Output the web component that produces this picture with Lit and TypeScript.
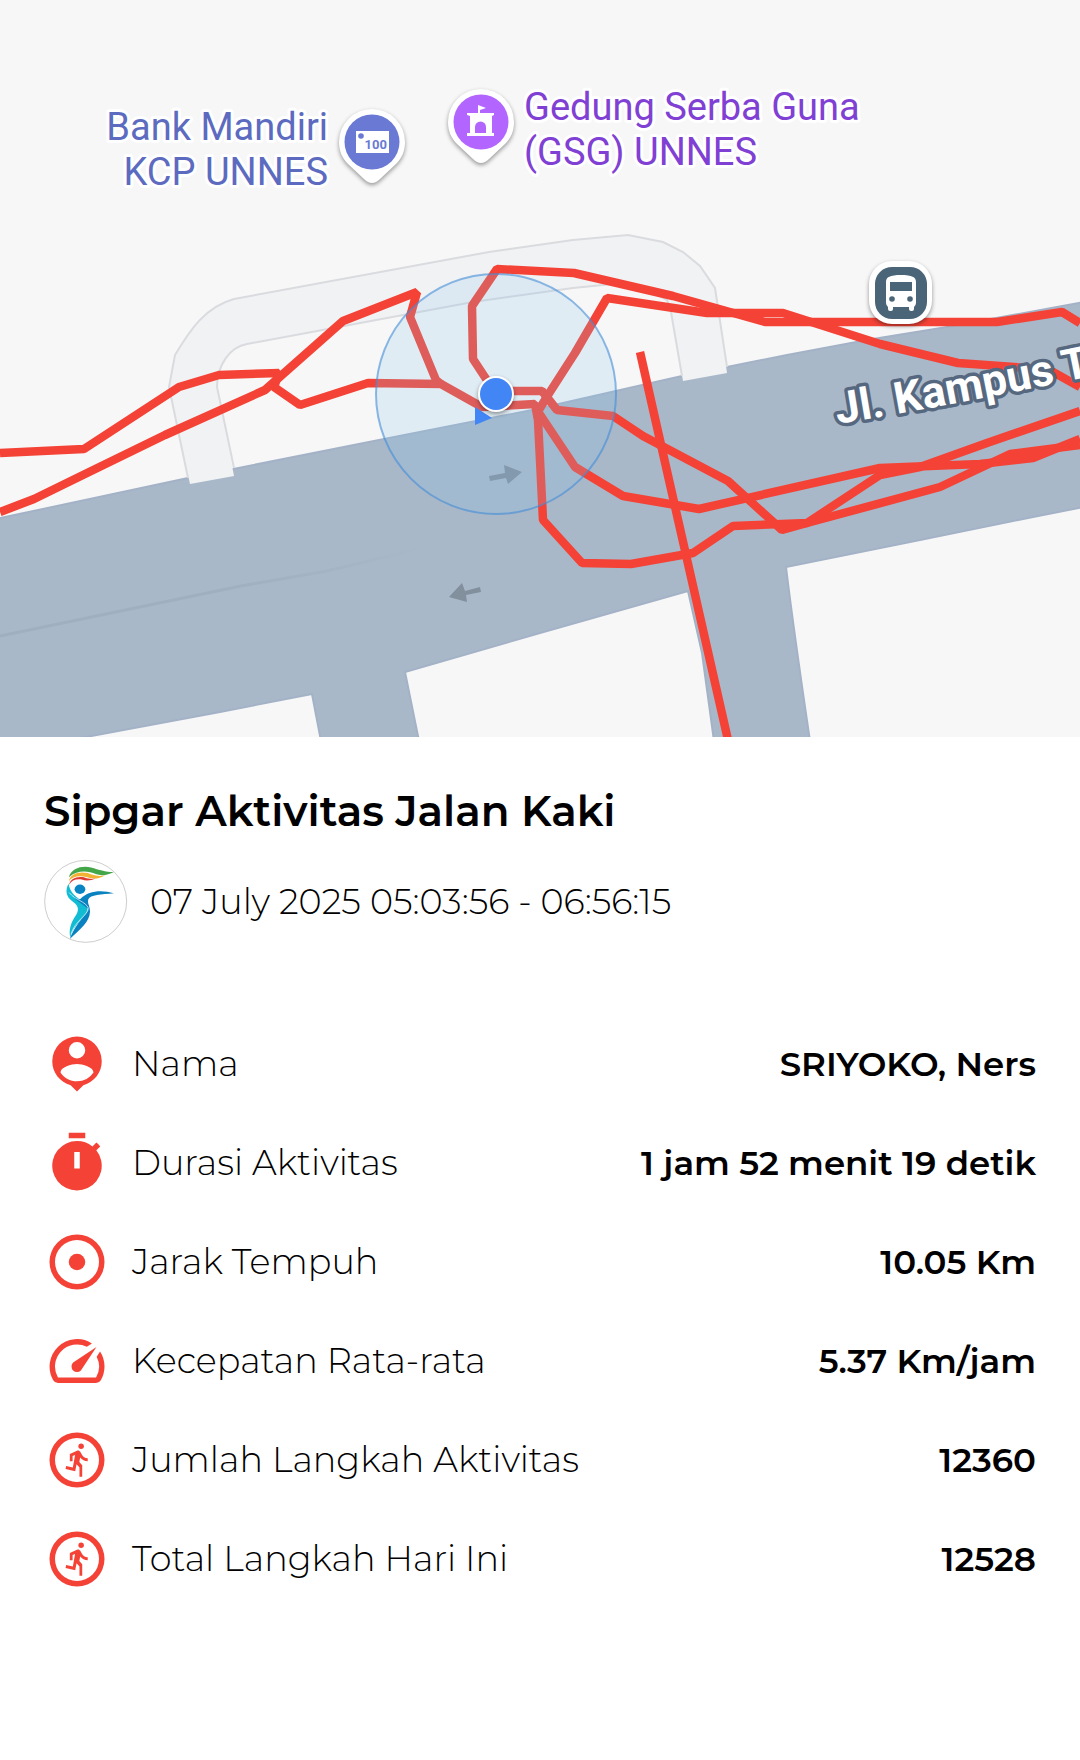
import { LitElement, html, css, svg, type SVGTemplateResult } from "lit";
import { customElement, property } from "lit/decorators.js";

const runner = svg`
  <path fill-rule="evenodd" d="M12 2a10 10 0 1 0 0 20 10 10 0 0 0 0-20zm0 18a8 8 0 1 1 0-16 8 8 0 0 1 0 16z"/>
  <circle cx="13.5" cy="7" r="1"/>
  <path transform="translate(6.4 5.2) scale(.5 .56)" d="M9.89 19.38l1-4.4 2.1 2v6h2v-7.5l-2.1-2 .6-3c1.3 1.5 3.3 2.5 5.5 2.5v-2c-1.9 0-3.5-1-4.3-2.4l-1-1.6c-.4-.6-1-1-1.7-1-.3 0-.5.1-.8.1l-5.2 2.2v4.7h2v-3.4l1.8-.7-1.6 8.1-4.9-1-.4 2z"/>`;

const ICONS: Record<string, SVGTemplateResult> = {
  person: svg`<path d="M12 2a9 9 0 0 0-9 9c0 4.17 2.84 7.67 6.69 8.69L12 22l2.31-2.31C18.16 18.67 21 15.17 21 11a9 9 0 0 0-9-9zm0 2a3 3 0 1 1 0 6 3 3 0 0 1 0-6zm0 14.3c-2.5 0-4.71-1.28-6-3.22.03-1.99 4-3.08 6-3.08 1.99 0 5.97 1.09 6 3.08a7.2 7.2 0 0 1-6 3.22z"/>`,
  timer: svg`<path fill-rule="evenodd" d="M15 1H9v2h6V1zm-4 13h2V8h-2v6zm8.03-6.61l1.42-1.42c-.43-.51-.9-.99-1.41-1.41l-1.42 1.42A8.96 8.96 0 0 0 12 4a9 9 0 1 0 7.03 3.39z"/>`,
  target: svg`<path fill-rule="evenodd" d="M12 2a10 10 0 1 0 0 20 10 10 0 0 0 0-20zm0 18a8 8 0 1 1 0-16 8 8 0 0 1 0 16z"/><circle cx="12" cy="12" r="3"/>`,
  speed: svg`<path d="M20.38 8.57l-1.23 1.85a8 8 0 0 1-.22 7.58H5.07A8 8 0 0 1 15.58 6.85l1.85-1.23A10 10 0 0 0 3.35 19a2 2 0 0 0 1.72 1h13.85a2 2 0 0 0 1.74-1 10 10 0 0 0-.27-10.44zm-9.79 6.84a2 2 0 0 0 2.83 0l5.66-8.49-8.49 5.66a2 2 0 0 0 0 2.83z"/>`,
  run: runner,
};

interface Stat {
  icon: string;
  label: string;
  value: string;
}

const STATS: Stat[] = [
  { icon: "person", label: "Nama", value: "SRIYOKO, Ners" },
  { icon: "timer", label: "Durasi Aktivitas", value: "1 jam 52 menit 19 detik" },
  { icon: "target", label: "Jarak Tempuh", value: "10.05 Km" },
  { icon: "speed", label: "Kecepatan Rata-rata", value: "5.37 Km/jam" },
  { icon: "run", label: "Jumlah Langkah Aktivitas", value: "12360" },
  { icon: "run", label: "Total Langkah Hari Ini", value: "12528" },
];

/* Recorded walk, split into the legs that cross the visible area. */
const TRACKS = [
  "0,453 84,449 179,387 219,375 279,373 274,387 300,405 368,383 441,384 482,407 535,404 538,420 543,520 582,563 631,564 693,553 733,526 807,523 940,487 1010,454 1080,445",
  "0,512 34,499 83,475 165,435 265,390 274,382 343,321 417,292 410,317 436,380 441,384",
  "496,394 473,359 472,306 497,269 574,273 673,296 765,322 997,322 1062,312 1080,323",
  "537,413 548,395 575,353 607,298 707,313 783,313 880,344 958,363 1027,368 1053,372 1080,387",
  "496,391 542,391 557,410 613,416 643,436 728,481 782,530 807,523 880,475 920,467 987,443 1080,411",
  "537,410 575,467 623,496 699,509 880,468 980,464 1033,458 1080,439",
  "640,352 669,480 728,740",
];

@customElement("route-map")
export class RouteMap extends LitElement {
  static styles = css`
    :host {
      display: block;
    }
    .map {
      display: block;
      width: 100%;
      height: auto;
      background: #f7f7f7;
    }
    .road {
      fill: #a9b8c9;
      stroke: #a3b2c6;
      stroke-width: 2;
    }
    .footway {
      fill: #f1f2f4;
    }
    .footway-edge {
      fill: none;
      stroke: #dadbdf;
      stroke-width: 2;
    }
    .track {
      fill: none;
      stroke: #f44336;
      stroke-width: 8.5;
      stroke-linejoin: bevel;
    }
    .accuracy {
      fill: rgba(135, 198, 237, 0.205);
      stroke: rgba(66, 140, 215, 0.6);
      stroke-width: 2;
    }
    .arrow {
      fill: #828f9d;
    }
    .place {
      font-family: Roboto, "Liberation Sans", sans-serif;
      font-size: 38px;
      stroke: #fff;
      stroke-width: 6;
      stroke-linejoin: round;
      paint-order: stroke;
    }
    .bank {
      fill: #5c6bc0;
      text-anchor: end;
    }
    .hall {
      fill: #8040d4;
    }
    .street {
      font-family: Roboto, "Liberation Sans", sans-serif;
      font-size: 44px;
      font-weight: 700;
      fill: #fff;
      stroke: #566880;
      stroke-width: 7;
      stroke-linejoin: round;
      paint-order: stroke;
    }
    .note {
      font-family: Roboto, "Liberation Sans", sans-serif;
      font-size: 13px;
      font-weight: 700;
      fill: #6979d4;
      text-anchor: end;
    }
    .white {
      fill: #fff;
    }
    .shadow {
      filter: drop-shadow(0 2px 2px rgba(0, 0, 0, 0.4));
    }
  `;

  private pin(x: number, y: number, color: string, glyph: SVGTemplateResult) {
    return svg`<g transform="translate(${x} ${y})">
      <path class="white shadow" d="M-33 0A33 33 0 0 1 33 0C33 9 30 16 24 22L8 37Q0 45-8 37L-24 22C-30 16-33 9-33 0z"/>
      <circle r="27.5" fill=${color}/>
      ${glyph}
    </g>`;
  }

  render() {
    return html`
      <svg class="map" viewBox="0 0 1080 737" role="img" aria-label="Peta rute aktivitas">
        <defs>
          <path id="street-line" d="M838 424Q940 408 1150 364"/>
          <linearGradient id="median" gradientUnits="userSpaceOnUse" x1="0" y1="0" x2="430" y2="0">
            <stop offset="0.5" stop-color="#9fafc0"/>
            <stop offset="1" stop-color="#a9b8c9"/>
          </linearGradient>
        </defs>
        <path class="road" d="M-4 519L188 478L379 440L532 410L682 376L727 367L787 355L867 340L947 327L1084 302V507L1033 517L920 540L786 567C793 625 801 680 810 741H714L702 653L688 591L540 633L405 672L419 741H321L312 694L220 712L86 737L60 741H-4z"/>
        <path d="M0 636L241 586L327 571L427 547" fill="none" stroke="url(#median)" stroke-width="3"/>
        <path class="footway" d="M190 484L169 387L175 355C190 330 205 307 234 299L489 252L573 240L628 235L663 242L683 252L700 266L715 288L727 373L683 381L671 312L667 300L640 286L613 284L573 288L473 302L344 326L247 344C230 347 217 365 217 387L234 476z"/>
        <path class="footway-edge" d="M188 478L169 387L175 355C190 330 205 307 234 299L489 252L573 240L628 235L663 242L683 252L700 266L715 288L727 367M234 468L217 387C217 365 230 347 247 344L344 326L473 302L573 288L613 284L640 286L667 300L671 312L682 376"/>
        <path class="arrow" d="M489 476L505 473L504 465L522 472L508 484L506 478L490 481z"/>
        <path class="arrow" d="M480 587L465 591L462 583L449 597L467 602L466 595L481 592z"/>
        ${TRACKS.map((points) => svg`<polyline class="track" points=${points}/>`)}
        <circle class="accuracy" cx="496" cy="394" r="120"/>
        <path d="M475 407L492 418L475 425z" fill="#4285f4"/>
        <circle class="white shadow" cx="496" cy="394" r="18"/>
        <circle cx="496" cy="394" r="16" fill="#4285f4"/>
        <text class="street"><textPath href="#street-line">Jl. Kampus T</textPath></text>
        <text class="place bank" x="328" y="140">Bank Mandiri</text>
        <text class="place bank" x="328" y="185">KCP UNNES</text>
        <text class="place hall" x="524" y="120">Gedung Serba Guna</text>
        <text class="place hall" x="524" y="165">(GSG) UNNES</text>
        ${this.pin(372, 142, "#6979d4", svg`
          <path class="white" d="M-16-11H17V11H-16z"/>
          <circle cx="-11" cy="-6" r="2.8" fill="#6979d4"/>
          <text class="note" x="15" y="7">100</text>`)}
        ${this.pin(481, 122, "#b366ff", svg`
          <path class="white" d="M-14-9H-3V-17L5-14L-1-12V-9H13V-7L11-6V11H13V14H-14V11H-11V-6L-14-7z"/>
          <path d="M-6 11V5A5 5 0 0 1 5 5V11z" fill="#b366ff"/>`)}
        <g transform="translate(901 293)">
          <rect class="white shadow" x="-32" y="-32" width="63" height="63" rx="23"/>
          <rect x="-26" y="-26" width="52" height="52" rx="17" fill="#4a6478"/>
          <path class="white" d="M-15-11C-15-16-11-18 0-18C11-18 15-16 15-11V10Q15 12 13 14V16Q13 18 11 18H10Q8 18 8 16V14H-8V16Q-8 18-10 18H-11Q-13 18-13 16V14Q-15 12-15 10z"/>
          <path d="M-11-11H11V-2H-11z" fill="#4a6478"/>
          <circle cx="-9" cy="6" r="2.8" fill="#4a6478"/>
          <circle cx="9" cy="6" r="2.8" fill="#4a6478"/>
        </g>
      </svg>
    `;
  }
}

@customElement("stat-row")
export class StatRow extends LitElement {
  @property() icon = "";
  @property() label = "";
  @property() value = "";

  static styles = css`
    :host {
      display: flex;
      align-items: center;
      gap: 22px;
      min-height: 99px;
    }
    .icon {
      flex: none;
      width: 66px;
      height: 66px;
      fill: #f44336;
    }
    .label {
      flex: 1;
      font-size: 35px;
      font-weight: 300;
    }
    .value {
      font-size: 34px;
      font-weight: 600;
      text-align: right;
    }
  `;

  render() {
    return html`
      <svg class="icon" viewBox="0 0 24 24" aria-hidden="true">${ICONS[this.icon]}</svg>
      <span class="label">${this.label}</span>
      <span class="value">${this.value}</span>
    `;
  }
}

@customElement("app-root")
export class AppRoot extends LitElement {
  static styles = css`
    :host {
      display: block;
      min-height: 100vh;
      background: #fff;
      color: #000;
      font-family: Montserrat, Inter, "Open Sans", sans-serif;
    }
    .details {
      padding: 48px 44px;
    }
    .title {
      margin: 0;
      font-size: 42px;
      line-height: 52px;
      font-weight: 600;
    }
    .when {
      display: flex;
      align-items: center;
      gap: 22px;
      margin: 22px 0 71px;
      font-size: 35px;
      font-weight: 300;
    }
    .avatar {
      flex: none;
      width: 84px;
      height: 84px;
    }
  `;

  render() {
    return html`
      <route-map></route-map>
      <main class="details">
        <h1 class="title">Sipgar Aktivitas Jalan Kaki</h1>
        <div class="when">
          <svg class="avatar" viewBox="26 28 250 250" aria-hidden="true">
            <circle cx="150" cy="154" r="122" fill="#fff" stroke="#b5b5b5" stroke-width="2"/>
            <path fill="#43a648" d="M100 82C108 55 138 47 166 53C190 60 208 66 234 67C218 75 198 80 180 73C158 63 125 60 100 82z"/>
            <path fill="#f2b233" d="M100 94C103 72 130 64 156 70C176 79 190 80 208 76C190 87 172 89 155 82C130 76 110 80 100 94z"/>
            <path fill="#de3831" d="M101 105C103 86 125 78 147 83C160 88 168 88 180 86C165 93 150 93 138 89C120 87 108 92 101 105z"/>
            <ellipse cx="133" cy="118" rx="16" ry="14" fill="#0a85c4"/>
            <path fill="#12bdd4" d="M99 102C88 122 92 142 112 155C132 168 130 184 118 200C104 222 100 240 104 262C110 238 124 222 140 204C160 182 160 172 146 158C120 140 104 130 99 102z"/>
            <path fill="#0b82c0" d="M234 130C200 120 160 120 134 147C124 150 120 142 116 138L118 146C130 156 142 164 157 176C156 194 122 214 103 266C132 238 162 216 163 184C163 168 154 160 158 148C164 134 196 134 234 130z"/>
            <path fill="none" stroke="#fff" stroke-width="2" d="M101 128C118 150 150 154 158 174C158 194 118 212 106 252"/>
          </svg>
          <time datetime="2025-07-07T05:03:56">07 July 2025 05:03:56 - 06:56:15</time>
        </div>
        ${STATS.map(
          (s) => html`<stat-row .icon=${s.icon} .label=${s.label} .value=${s.value}></stat-row>`,
        )}
      </main>
    `;
  }
}
